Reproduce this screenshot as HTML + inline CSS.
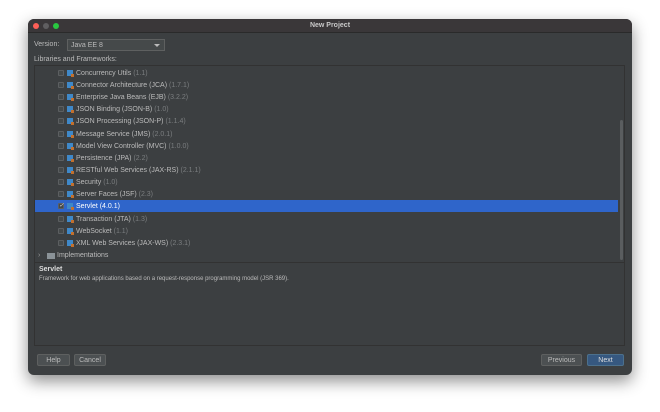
<!DOCTYPE html>
<html><head><style>
*{margin:0;padding:0;box-sizing:border-box}
body{width:660px;height:412px;background:#fff;font-family:"Liberation Sans",sans-serif;position:relative;overflow:hidden}
.win{position:absolute;left:28px;top:19px;width:604px;height:356px;background:#3c3f41;border-radius:6px;box-shadow:0 6px 16px rgba(0,0,0,.45);overflow:hidden}
.tb{height:14px;background:#3a3739;border-bottom:1px solid #2a2a2a;text-align:center;color:#c9c9c9;font-size:7px;line-height:14px;font-weight:bold}
.dot{position:absolute;top:4px;width:6px;height:6px;border-radius:50%}
.t{position:absolute;color:#bbbbbb;font-size:7px;white-space:nowrap}
.panel{position:absolute;left:6px;top:46px;width:591px;height:281px;border:1px solid #323232}
.row{position:absolute;left:0;width:583px;height:12px;font-size:7px;line-height:13px;color:#bbbbbb}
.cb{position:absolute;left:23px;top:3px;width:6px;height:6px;border:1px solid #5c5f61;background:#45494a;border-radius:1px}
.ic{position:absolute;left:32px;top:3px;width:6px;height:6px;background:#3f88c8}
.ic:after{content:"";position:absolute;right:-1px;bottom:-1px;width:3px;height:3px;background:#c2702d}
.row span.l{position:absolute;left:41px}
.v{color:#7a7d7f}
.sel{background:#2f65ca;color:#fff}
.btn{position:absolute;top:335px;height:12px;background:#4c5052;border:1px solid #5e6060;border-radius:2px;color:#bbb;font-size:7px;line-height:11px;text-align:center}
</style></head><body>
<div class="win">
<div class="tb">New Project</div>
<div class="dot" style="left:5px;background:#fe5f57"></div>
<div class="dot" style="left:15px;background:#5f5e60"></div>
<div class="dot" style="left:25px;background:#29c840"></div>
<div class="t" style="left:6px;top:22px">Version:</div>
<div style="position:absolute;left:39px;top:20px;width:98px;height:12px;background:#45494a;border:1px solid #5e6060;color:#bbb;font-size:7px;line-height:11px;padding-left:3px">Java EE 8<span style="position:absolute;right:4px;top:4px;border-left:3px solid transparent;border-right:3px solid transparent;border-top:3px solid #bbb"></span></div>
<div class="t" style="left:6px;top:37px">Libraries and Frameworks:</div>
<div class="panel">
<div class="row" style="top:1px"><i class="cb"></i><i class="ic"></i><span class="l">Concurrency Utils <span class="v">(1.1)</span></span></div>
<div class="row" style="top:13px"><i class="cb"></i><i class="ic"></i><span class="l">Connector Architecture (JCA) <span class="v">(1.7.1)</span></span></div>
<div class="row" style="top:25px"><i class="cb"></i><i class="ic"></i><span class="l">Enterprise Java Beans (EJB) <span class="v">(3.2.2)</span></span></div>
<div class="row" style="top:37px"><i class="cb"></i><i class="ic"></i><span class="l">JSON Binding (JSON-B) <span class="v">(1.0)</span></span></div>
<div class="row" style="top:49px"><i class="cb"></i><i class="ic"></i><span class="l">JSON Processing (JSON-P) <span class="v">(1.1.4)</span></span></div>
<div class="row" style="top:62px"><i class="cb"></i><i class="ic"></i><span class="l">Message Service (JMS) <span class="v">(2.0.1)</span></span></div>
<div class="row" style="top:74px"><i class="cb"></i><i class="ic"></i><span class="l">Model View Controller (MVC) <span class="v">(1.0.0)</span></span></div>
<div class="row" style="top:86px"><i class="cb"></i><i class="ic"></i><span class="l">Persistence (JPA) <span class="v">(2.2)</span></span></div>
<div class="row" style="top:98px"><i class="cb"></i><i class="ic"></i><span class="l">RESTful Web Services (JAX-RS) <span class="v">(2.1.1)</span></span></div>
<div class="row" style="top:110px"><i class="cb"></i><i class="ic"></i><span class="l">Security <span class="v">(1.0)</span></span></div>
<div class="row" style="top:122px"><i class="cb"></i><i class="ic"></i><span class="l">Server Faces (JSF) <span class="v">(2.3)</span></span></div>
<div class="row sel" style="top:134px"><i class="cb" style="font-size:6px;line-height:4px;color:#ddd;text-align:center">✓</i><i class="ic"></i><span class="l">Servlet (4.0.1)</span></div>
<div class="row" style="top:147px"><i class="cb"></i><i class="ic"></i><span class="l">Transaction (JTA) <span class="v">(1.3)</span></span></div>
<div class="row" style="top:159px"><i class="cb"></i><i class="ic"></i><span class="l">WebSocket <span class="v">(1.1)</span></span></div>
<div class="row" style="top:171px"><i class="cb"></i><i class="ic"></i><span class="l">XML Web Services (JAX-WS) <span class="v">(2.3.1)</span></span></div>
<div class="row" style="top:183px"><span style="position:absolute;left:3px;color:#999">›</span><i style="position:absolute;left:12px;top:4px;width:8px;height:6px;background:#8a9297"></i><span style="position:absolute;left:22px">Implementations</span></div>
<div style="position:absolute;left:585px;top:54px;width:3px;height:140px;background:#5a5d5f;border-radius:2px"></div>
<div style="position:absolute;left:0;top:196px;width:589px;border-top:1px solid #323232"></div>
<div style="position:absolute;left:4px;top:200px;color:#ddd;font-size:7px;font-weight:bold">Servlet</div>
<div style="position:absolute;left:4px;top:210px;color:#bbb;font-size:6px;white-space:nowrap">Framework for web applications based on a request-response programming model (JSR 369).</div>
</div>
<div class="btn" style="left:9px;width:33px">Help</div>
<div class="btn" style="left:46px;width:32px">Cancel</div>
<div class="btn" style="left:513px;width:41px">Previous</div>
<div class="btn" style="left:559px;width:37px;background:#365880;border-color:#4c708c;color:#ddd">Next</div>
</div>
</body></html>
